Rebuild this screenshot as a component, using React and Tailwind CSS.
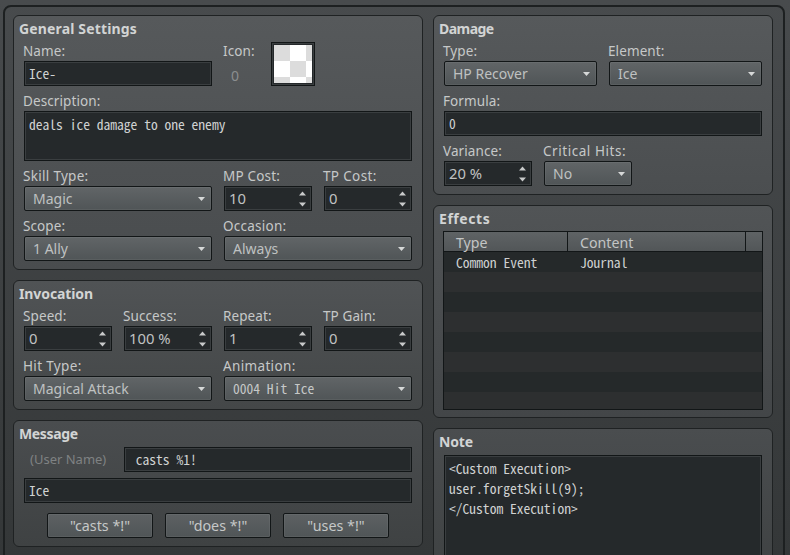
import React from 'react';

const MONO = "inline-block whitespace-pre font-['Noto_Sans_Mono_CJK_JP','Liberation_Mono',monospace] text-[13.56px] leading-5 slashed-zero";

function Panel({ title, tracking = '', className = '', children }) {
  return (
    <section className={`rounded-md border border-[#1f2223] bg-linear-to-b px-2.5 pb-2 ${className}`}>
      <h2 className={`-ml-[5px] h-[25px] whitespace-nowrap text-[14px] leading-[25px] font-bold text-[#d2d4d4] ${tracking}`}>{title}</h2>
      {children}
    </section>
  );
}

function Field({ label, tracking = 'tracking-[0.1px]', className = '', children }) {
  return (
    <div className={className}>
      <div className={`-ml-px h-5 whitespace-nowrap text-[13.5px] leading-5 text-[#c6c8c8] ${tracking}`}>{label}</div>
      {children}
    </div>
  );
}

function Box({ className = '', children }) {
  return (
    <div className={`flex border border-[#121617] bg-[#25292b] pl-1 text-[#d0d2d2] inset-ring inset-ring-[#3a3e40] ${className}`}>
      {children}
    </div>
  );
}

function TextInput({ value, className = '' }) {
  return (
    <Box className={`h-[25px] pt-px ${className}`}>
      <span className={MONO}>{value}</span>
    </Box>
  );
}

function Spin({ value }) {
  return (
    <Box className="h-[25px] w-[88px] items-center justify-between pr-[5px]">
      <span className="pb-px text-[14.8px] leading-5 text-[#c0c2c2]">{value}</span>
      <svg width="7" height="16" viewBox="0 0 7 16" fill="#c8caca">
        <path d="M0 4.5 3.5.5 7 4.5z" />
        <path d="M0 11.5h7L3.5 15.5z" />
      </svg>
    </Box>
  );
}

function Select({ value, mono, className = 'w-[188px]' }) {
  return (
    <div className={`flex h-[25px] items-center justify-between rounded-[2px] border border-[#121617] bg-linear-to-b from-[#616567] to-[#505557] pr-1.5 pl-2 inset-ring inset-ring-white/5 ${className}`}>
      <span className={mono ? `${MONO} mb-px text-[#c6c8c8]` : 'mt-px text-[14px] leading-5 text-[#bfc1c1]'}>{value}</span>
      <svg width="7" height="4" viewBox="0 0 7 4" fill="#d6d8d8">
        <path d="M0 0h7L3.5 4z" />
      </svg>
    </div>
  );
}

function Button({ children }) {
  return (
    <button className="h-[25px] w-[106px] rounded-[2px] border border-[#121617] bg-linear-to-b from-[#5d6163] to-[#505557] text-[14.3px] leading-5 text-[#c6c8c8] inset-ring inset-ring-white/5">
      {children}
    </button>
  );
}

const effects = [
  { type: 'Common Event', content: 'Journal' },
  {}, {}, {}, {}, {}, {}, {},
];

function General() {
  return (
    <Panel title="General Settings" tracking="tracking-[0.15px]" className="h-[255px] from-[#56595b] to-[#494c4e]">
      <div className="flex h-[45px] gap-3">
        <Field label="Name:" className="w-[188px]">
          <TextInput value="Ice-" />
        </Field>
        <Field label="Icon:" className="w-[35px]">
          <div className="pl-[7px] text-[14px] leading-[29px] text-[#8b8e8f]">0</div>
        </Field>
        <div className="mt-px size-11 border border-[#121617] bg-[#25292b] p-0.5 inset-ring inset-ring-[#3a3e40]">
          <svg width="38" height="38" viewBox="0 0 38 38" className="block" fill="#dcdcdc">
            <rect width="38" height="38" fill="#fff" />
            <path d="M0 0h16v16H0zM32 0h6v16h-6zM16 16h16v16H16zM0 32h16v6H0zM32 32h6v6h-6z" />
          </svg>
        </div>
      </div>
      <Field label="Description:" className="mt-[5px]">
        <Box className="h-[50px] pt-0.5">
          <span className={MONO}>deals ice damage to one enemy</span>
        </Box>
      </Field>
      <div className="mt-[5px] flex gap-3">
        <Field label="Skill Type:" tracking="tracking-[0.3px]"><Select value="Magic" /></Field>
        <Field label="MP Cost:" tracking="tracking-[0.2px]"><Spin value="10" /></Field>
        <Field label="TP Cost:" tracking="tracking-[0.35px]"><Spin value="0" /></Field>
      </div>
      <div className="mt-[5px] flex gap-3">
        <Field label="Scope:"><Select value="1 Ally" /></Field>
        <Field label="Occasion:" tracking="tracking-[0.25px]"><Select value="Always" /></Field>
      </div>
    </Panel>
  );
}

function Invocation() {
  return (
    <Panel title="Invocation" tracking="tracking-[-0.1px]" className="h-[130px] from-[#505355] to-[#444748]">
      <div className="flex gap-3">
        <Field label="Speed:"><Spin value="0" /></Field>
        <Field label="Success:"><Spin value="100 %" /></Field>
        <Field label="Repeat:"><Spin value="1" /></Field>
        <Field label="TP Gain:"><Spin value="0" /></Field>
      </div>
      <div className="mt-[5px] flex gap-3">
        <Field label="Hit Type:" tracking="tracking-[0.35px]"><Select value="Magical Attack" /></Field>
        <Field label="Animation:" tracking="tracking-[0.35px]"><Select value="0004 Hit Ice" mono /></Field>
      </div>
    </Panel>
  );
}

function Message() {
  return (
    <Panel title="Message" tracking="tracking-[-0.35px]" className="h-[127px] from-[#4a4d4f] to-[#3f4243]">
      <div className="mt-px flex">
        <span className="w-[100px] pl-1.5 text-[13px] leading-[25px] text-[#7f8283]">(User Name)</span>
        <TextInput value=" casts %1!" className="flex-1" />
      </div>
      <TextInput value="Ice" className="mt-1.5" />
      <div className="mt-2.5 flex gap-3 pl-[23px]">
        <Button>"casts *!"</Button>
        <Button>"does *!"</Button>
        <Button>"uses *!"</Button>
      </div>
    </Panel>
  );
}

function Damage() {
  return (
    <Panel title="Damage" tracking="tracking-[-0.55px]" className="h-[180px] from-[#56595b] to-[#4b4e50]">
      <div className="flex gap-3">
        <Field label="Type:"><Select value="HP Recover" className="w-[153px]" /></Field>
        <Field label="Element:"><Select value="Ice" className="w-[153px]" /></Field>
      </div>
      <Field label="Formula:" className="mt-[5px]">
        <TextInput value="0" />
      </Field>
      <div className="mt-[5px] flex gap-3">
        <Field label="Variance:"><Spin value="20 %" /></Field>
        <Field label="Critical Hits:" tracking="tracking-[0.55px]"><Select value="No" className="w-[88px]" /></Field>
      </div>
    </Panel>
  );
}

function Effects() {
  return (
    <Panel title="Effects" tracking="tracking-[0.55px]" className="h-[213px] from-[#515456] to-[#434648]">
      <div className="-mx-px h-[179px] overflow-hidden border border-[#121617] bg-[#25292b]">
        <div className="flex h-5 border-b border-[#121617] bg-linear-to-b from-[#5f6365] to-[#525658] text-[14.2px] leading-[21px] text-[#c3c5c5]">
          <div className="w-[124px] border-r border-[#121617] pl-3">Type</div>
          <div className="w-[178px] border-r border-[#121617] pl-3">Content</div>
        </div>
        {effects.map((e, i) => (
          <div key={i} className="flex h-5 text-[#cfd1d1] odd:bg-[#2d2f30] even:bg-[#25292a]">
            <span className={`${MONO} w-[124px] pl-3`}>{e.type}</span>
            <span className={`${MONO} pl-3`}>{e.content}</span>
          </div>
        ))}
      </div>
    </Panel>
  );
}

function Note() {
  return (
    <Panel title="Note" tracking="tracking-[-0.15px]" className="h-[160px] from-[#4a4d4f] to-[#3e4142]">
      <Box className="mt-px h-[130px] pt-0.5">
        <span className={MONO}>{'<Custom Execution>\nuser.forgetSkill(9);\n</Custom Execution>'}</span>
      </Box>
    </Panel>
  );
}

export default function App() {
  return (
    <div className="h-[555px] w-[790px] overflow-hidden bg-linear-to-b from-[#484b4d] to-[#343738] pt-[5px] pl-[3px] font-['Noto_Sans',sans-serif] select-none">
      <div className="flex h-[600px] w-[782px] gap-2.5 rounded-lg border-2 border-[#1d2021] px-2 pt-2">
        <div className="flex w-[410px] flex-col gap-2.5">
          <General />
          <Invocation />
          <Message />
        </div>
        <div className="flex w-[340px] flex-col gap-2.5">
          <Damage />
          <Effects />
          <Note />
        </div>
      </div>
    </div>
  );
}
